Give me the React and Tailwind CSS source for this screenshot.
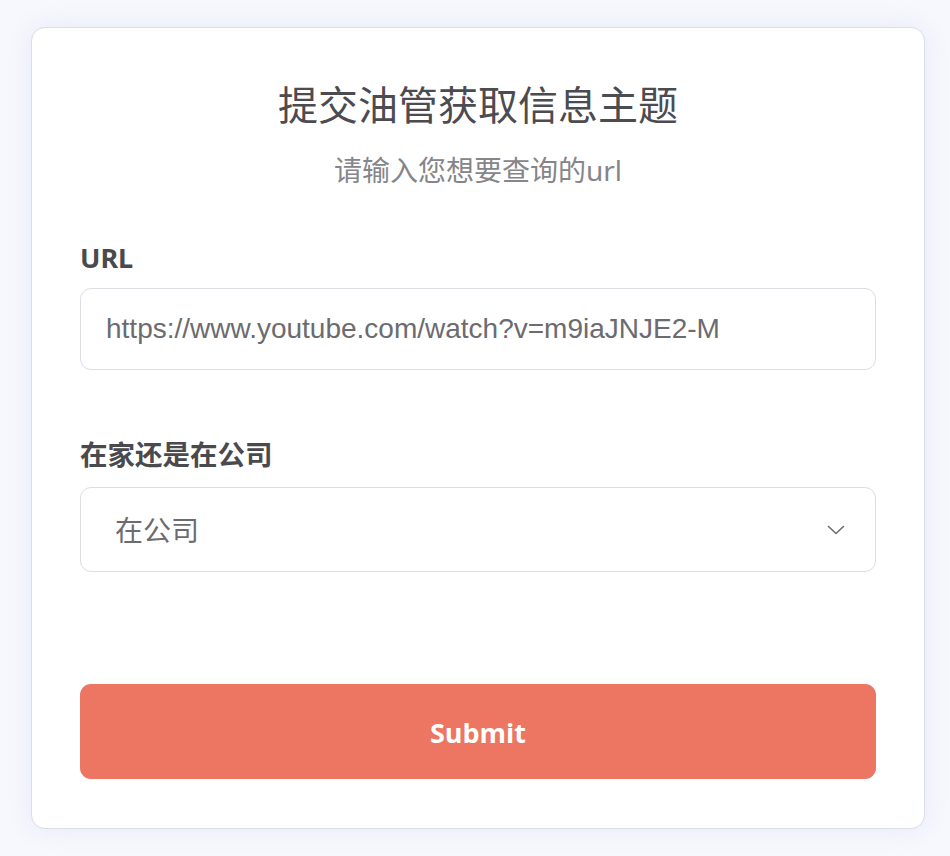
import { useState } from 'react';

const cjk = '"Noto Sans", "Noto Sans CJK SC", sans-serif';

export default function App() {
  const [url, setUrl] = useState('https://www.youtube.com/watch?v=m9iaJNJE2-M');
  const [place, setPlace] = useState('在公司');

  return (
    <div className="min-h-[856px] bg-[#f7f8fd] pt-[27px] pl-[31px]" style={{ fontFamily: cjk }}>
      <form
        onSubmit={(e) => e.preventDefault()}
        className="w-[894px] rounded-[14px] border-[1.5px] border-[#dcdde6] bg-white px-[48px] pt-[53px] pb-[49px] shadow-[0_0_24px_rgba(220,224,245,0.6)]"
      >
        <h1 className="text-center text-[40px] leading-[48px] font-normal text-[#4b4b50]">提交油管获取信息主题</h1>
        <p className="mt-[23px] text-center text-[28px] leading-[36px] text-[#85858a]">请输入您想要查询的url</p>

        <label className="mt-[52px] block text-[27px] leading-[36px] font-bold text-[#4a4a4e]">URL</label>
        <input
          value={url}
          onChange={(e) => setUrl(e.target.value)}
          className="mt-[12px] block h-[82px] w-full rounded-[11px] border-[1.5px] border-[#dcdde6] px-[25px] text-[28px] text-[#6b6b70] outline-none"
          style={{ fontFamily: '"Liberation Sans", Arial, sans-serif' }}
        />

        <label className="mt-[67px] block text-[27.5px] leading-[36px] font-bold text-[#4a4a4e]">在家还是在公司</label>
        <div className="relative mt-[14px]">
          <select
            value={place}
            onChange={(e) => setPlace(e.target.value)}
            className="block h-[85px] w-full appearance-none rounded-[11px] border-[1.5px] border-[#dcdde6] bg-white pl-[34px] text-[28px] text-[#6b6b70] outline-none"
          >
            <option>在家</option>
            <option>在公司</option>
          </select>
          <svg
            className="pointer-events-none absolute top-1/2 right-[31px] -translate-y-1/2"
            width="18"
            height="10"
            viewBox="0 0 18 10"
            fill="none"
          >
            <path d="M1.5 1.5 L9 8.5 L16.5 1.5" stroke="#6b6b70" strokeWidth="1.6" strokeLinecap="round" strokeLinejoin="round" />
          </svg>
        </div>

        <button
          type="submit"
          className="mt-[112px] block h-[95px] w-full rounded-[11px] bg-[#ec7662] pt-[3px] text-[27px] font-bold text-white"
          style={{ fontFamily: '"Open Sans", "Noto Sans", sans-serif' }}
        >
          Submit
        </button>
      </form>
    </div>
  );
}
